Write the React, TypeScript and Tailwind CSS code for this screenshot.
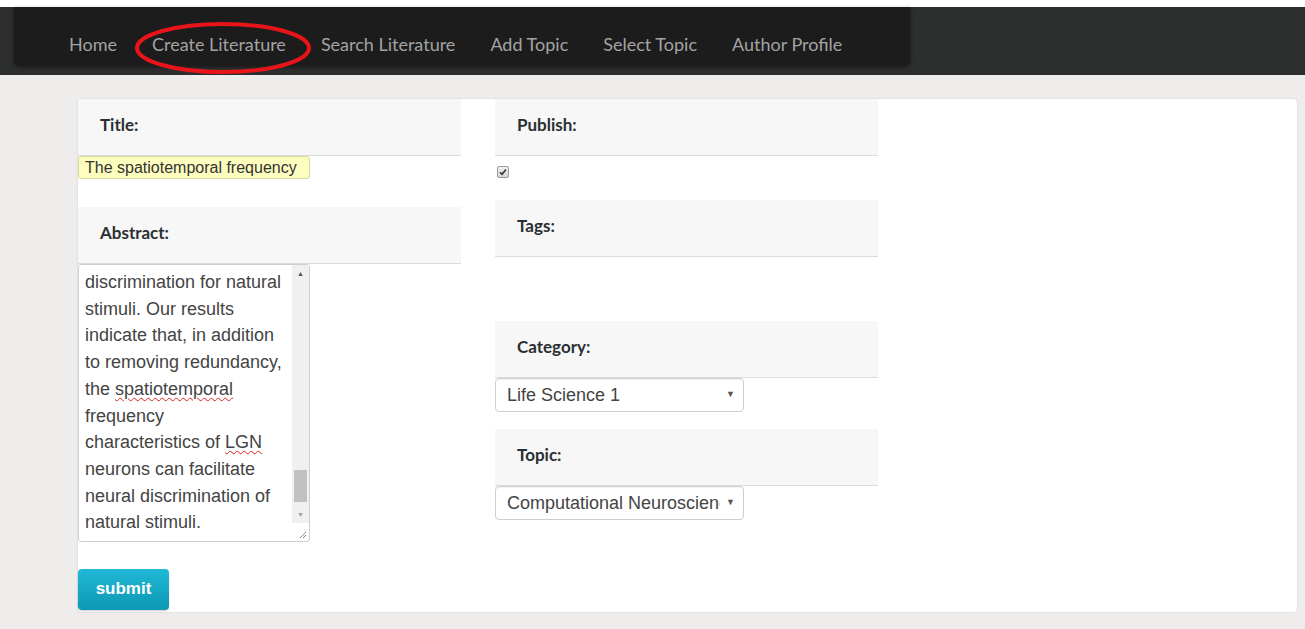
import React from "react";

const NAV = ["Home", "Create Literature", "Search Literature", "Add Topic", "Select Topic", "Author Profile"];

const ABSTRACT_LINES: React.ReactNode[] = [
  "discrimination for natural",
  "stimuli. Our results",
  "indicate that, in addition",
  "to removing redundancy,",
  <>
    the{" "}
    <span className="underline decoration-wavy decoration-[#e02020] decoration-1 underline-offset-2">spatiotemporal</span>
  </>,
  "frequency",
  <>
    characteristics of{" "}
    <span className="underline decoration-wavy decoration-[#e02020] decoration-1 underline-offset-2">LGN</span>
  </>,
  "neurons can facilitate",
  "neural discrimination of",
  "natural stimuli.",
];

const SectionHeader = ({ label }: { label: string }) => (
  <div className="h-[57px] bg-[#f7f7f7] border-b border-[#dcdcdc] flex items-center pl-[22px] pb-[4px]">
    <span className="font-['Lato','Open_Sans',sans-serif] font-bold text-[17px] text-[#2a2f33]">{label}</span>
  </div>
);

const SelectBox = ({ value }: { value: string }) => (
  <div className="w-[249px] h-[34px] border border-[#cfcfcf] rounded-[4px] bg-white flex items-center pl-[11px] pr-[8px] shadow-[inset_0_1px_1px_rgba(0,0,0,0.05)]">
    <div className="flex-1 min-w-0 overflow-hidden">
      <span className="block whitespace-nowrap text-[18px] text-[#444] font-['Liberation_Sans',Arial,sans-serif]">
        {value}
      </span>
    </div>
    <span className="text-[9px] text-[#555] pl-[6px]">▼</span>
  </div>
);

export default function App() {
  return (
    <div className="min-h-screen bg-[#eeedeb] font-['Liberation_Sans',Arial,sans-serif]">
      <div className="h-[7px] bg-white" />
      {/* top bar */}
      <div className="relative h-[68px] bg-[#2d2e2e] pl-[14px]">
        <nav className="w-[896px] h-[58px] bg-[#1c1c1c] rounded-b-[5px] shadow-[0_2px_4px_rgba(0,0,0,0.5)] flex items-center pl-[55px] pt-[16px]">
          {NAV.map((item, i) => (
            <span
              key={item}
              className={`font-['Lato','Open_Sans',sans-serif] text-[18px] text-[#a3a3a3] ${i === 0 ? "" : "ml-[35px]"}`}
            >
              {item}
            </span>
          ))}
        </nav>
        {/* red annotation ellipse */}
        <svg className="absolute left-[133px] top-[14px] pointer-events-none" width="180" height="56" viewBox="0 0 180 56">
          <ellipse cx="90" cy="27" rx="86" ry="24" fill="none" stroke="#e8141c" strokeWidth="4" />
        </svg>
      </div>

      {/* content */}
      <div className="pt-[24px] pl-[78px] pr-[8px] pb-[17px]">
        <div className="bg-white rounded-[4px] shadow-[0_0_2px_rgba(0,0,0,0.15)] h-[513px] flex gap-[34px]">
          {/* left column */}
          <div className="w-[383px] flex flex-col">
            <SectionHeader label="Title:" />
            <div className="w-[232px] h-[23px] bg-[#fdfdbe] border border-[#d9d9a0] rounded-[3px] flex items-center pl-[6px] text-[16px] text-[#333] whitespace-nowrap">
              The spatiotemporal frequency
            </div>
            <div className="h-[28px]" />
            <SectionHeader label="Abstract:" />
            <div className="relative w-[232px] h-[278px] border border-[#cfcfcf] rounded-[3px] flex">
              <div className="flex-1 pl-[6px] pt-[4px] text-[18px] leading-[26.7px] text-[#444] overflow-hidden">
                {ABSTRACT_LINES.map((l, i) => (
                  <div key={i} className="whitespace-nowrap">{l}</div>
                ))}
              </div>
              {/* scrollbar */}
              <div className="w-[17px] h-[258px] bg-[#f0f0f0] flex flex-col items-center">
                <span className="text-[7px] text-[#505050] h-[17px] leading-[17px]">▲</span>
                <div className="flex-1 w-full flex flex-col justify-end px-[2px]">
                  <div className="h-[32px] bg-[#c1c1c1] mb-[4px]" />
                </div>
                <span className="text-[7px] text-[#a0a0a0] h-[17px] leading-[17px]">▼</span>
              </div>
              <svg className="absolute right-[2px] bottom-[2px]" width="8" height="8" viewBox="0 0 8 8">
                <path d="M7 1 L1 7 M7 4 L4 7" stroke="#888" strokeWidth="1" />
              </svg>
            </div>
            <div className="h-[27px]" />
            <button className="w-[91px] h-[41px] rounded-[4px] bg-gradient-to-b from-[#20b9d6] to-[#0a98b4] shadow-[0_1px_2px_rgba(0,0,0,0.2)] text-white font-bold text-[17px] pb-[2px]">
              submit
            </button>
          </div>

          {/* right column */}
          <div className="w-[383px] flex flex-col">
            <SectionHeader label="Publish:" />
            <div className="h-[44px] pl-[2px] pt-[10px]">
              <div className="w-[12px] h-[12px] rounded-[2px] border border-[#9a9a9a] bg-gradient-to-b from-[#f2f2f2] to-[#d5d5d5] flex items-center justify-center">
                <svg width="8" height="8" viewBox="0 0 8 8">
                  <path d="M1 4.3 L3 6.3 L7 1.5" fill="none" stroke="#333" strokeWidth="1.6" />
                </svg>
              </div>
            </div>
            <SectionHeader label="Tags:" />
            <div className="h-[64px]" />
            <SectionHeader label="Category:" />
            <SelectBox value="Life Science 1" />
            <div className="h-[17px]" />
            <SectionHeader label="Topic:" />
            <SelectBox value="Computational Neuroscience" />
          </div>
        </div>
      </div>
    </div>
  );
}
